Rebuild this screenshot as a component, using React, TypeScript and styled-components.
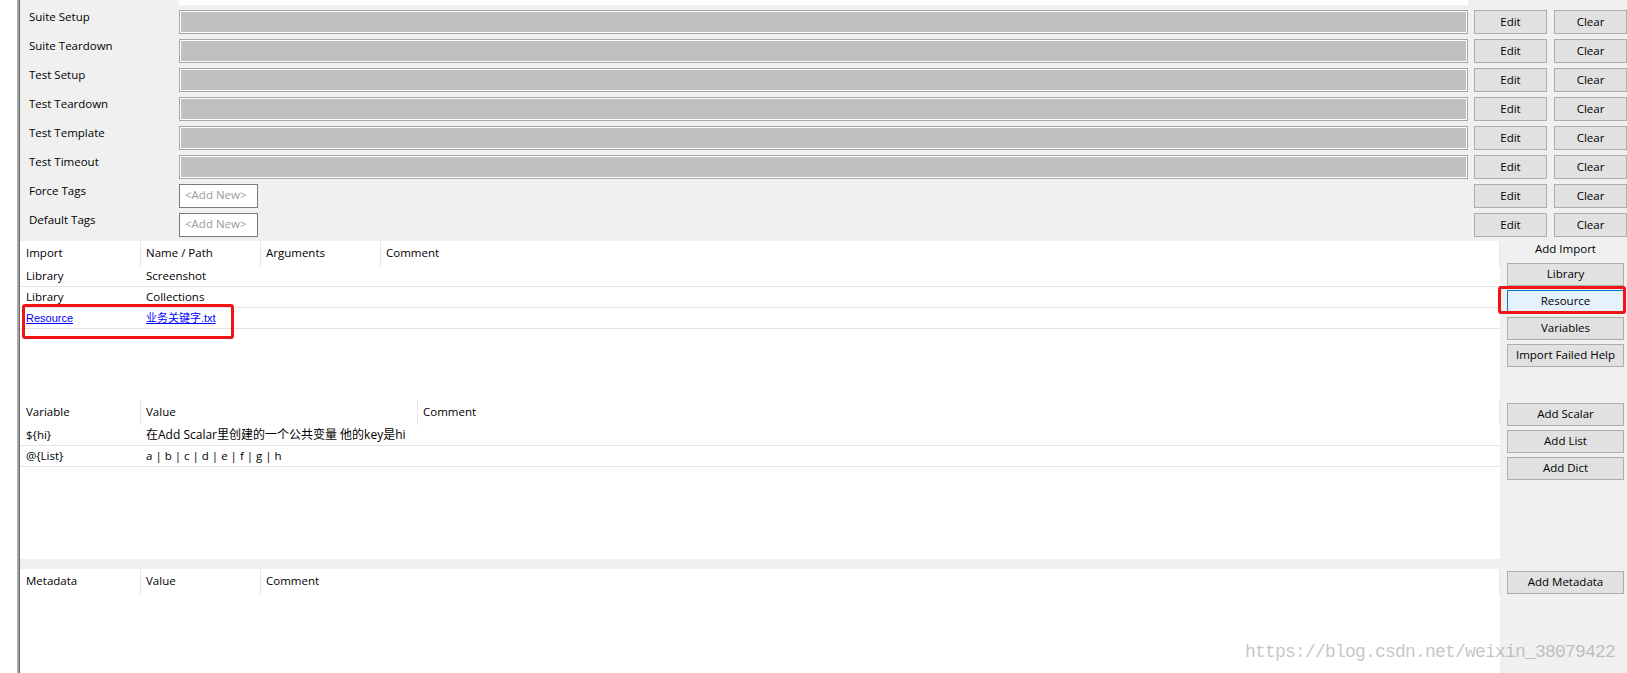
import React from "react";
import styled, { createGlobalStyle } from "styled-components";

const UI_FONT = `"Open Sans", "Noto Sans CJK SC", sans-serif`;

const GlobalStyle = createGlobalStyle`
  html, body {
    margin: 0;
    padding: 0;
    background: #ffffff;
  }
  body {
    font-family: ${UI_FONT};
    font-size: 11.5px;
    color: #000000;
  }
  * { box-sizing: border-box; }
`;

const Root = styled.div`
  position: relative;
  display: flex;
  width: 1627px;
  height: 673px;
  overflow: hidden;
  background: #ffffff;
`;

const Gutter = styled.div`
  flex: none;
  width: 17px;
  background: #ffffff;
`;

const Rule = styled.div`
  flex: none;
  width: 3px;
  background: #a9a9a9;
  border-right: 1px solid #666666;
`;

const Main = styled.div`
  flex: 1;
  min-width: 0;
  display: flex;
  flex-direction: column;
`;

/* ---------- settings block ---------- */

const Settings = styled.div`
  display: flex;
  flex-direction: column;
  gap: 5px;
  padding-bottom: 4px;
  background: #f0f0f0;
`;

const ClippedRow = styled.div`
  height: 5px;
  padding: 0 159px;
`;

const ClippedField = styled.div`
  height: 100%;
  background: #ffffff;
`;

const SettingRow = styled.div`
  display: flex;
  align-items: stretch;
  height: 24px;
`;

const SettingLabel = styled.div`
  flex: none;
  width: 159px;
  padding-left: 9px;
  line-height: 13px;
  white-space: nowrap;
`;

const FieldSlot = styled.div`
  flex: 1;
  display: flex;
  min-width: 0;
`;

const ValueField = styled.div`
  flex: 1;
  background: #c0c0c0;
  border: 1px solid #a6a6a6;
  box-shadow: inset 0 0 0 1px #ffffff;
`;

const TagBox = styled.div`
  flex: none;
  width: 79px;
  background: #ffffff;
  border: 1px solid #7a7a7a;
  color: #9a9a9a;
  padding-left: 5px;
  line-height: 20px;
  white-space: nowrap;
`;

const ActionButton = styled.button<{ $gap: number }>`
  flex: none;
  width: 73px;
  height: 24px;
  margin-left: ${(p) => p.$gap}px;
  padding: 0 0 2px;
  background: #e1e1e1;
  border: 1px solid #adadad;
  font-family: ${UI_FONT};
  font-size: 11.5px;
  color: #000000;
  text-align: center;
`;

/* ---------- lower grids ---------- */

const Lower = styled.div`
  flex: 1;
  display: flex;
  flex-direction: column;
  background: #f0f0f0;
`;

const Section = styled.div<{ $h?: number; $mt?: number }>`
  display: flex;
  flex: ${(p) => (p.$h ? "none" : "1")};
  height: ${(p) => (p.$h ? `${p.$h}px` : "auto")};
  margin-top: ${(p) => p.$mt ?? 0}px;
`;

const GridArea = styled.div`
  position: relative;
  flex: 1;
  min-width: 0;
  background: #ffffff;
`;

const GridHeader = styled.div`
  display: flex;
  height: 25px;
  padding-left: 1px;
`;

const HeaderCell = styled.div<{ $w?: number }>`
  flex: ${(p) => (p.$w ? "none" : "1")};
  width: ${(p) => (p.$w ? `${p.$w}px` : "auto")};
  display: flex;
  align-items: center;
  padding: 0 0 2px 5px;
  border-right: 1px solid #e5e5e5;
  white-space: nowrap;
`;

const GridRow = styled.div`
  display: flex;
  align-items: center;
  height: 21px;
  padding: 0 0 2px 1px;
  border-bottom: 1px solid #e3e3e3;
`;

const Cell = styled.div<{ $w?: number; $size?: number }>`
  flex: ${(p) => (p.$w ? "none" : "1")};
  width: ${(p) => (p.$w ? `${p.$w}px` : "auto")};
  padding-left: 5px;
  font-size: ${(p) => p.$size ?? 11.5}px;
  white-space: nowrap;
  overflow: hidden;
`;

const LinkText = styled.a`
  font-family: "Liberation Sans", "Noto Sans CJK SC", sans-serif;
  font-size: 11px;
  color: #0000ff;
  text-decoration: underline;
  cursor: pointer;
`;

const Side = styled.div<{ $pt: number }>`
  position: relative;
  flex: none;
  width: 127px;
  display: flex;
  flex-direction: column;
  gap: 4px;
  padding: ${(p) => p.$pt}px 3px 0 7px;
`;

const SideLabel = styled.div`
  line-height: 15px;
  margin-bottom: 3px;
  text-align: center;
  white-space: nowrap;
`;

const SideButton = styled.button<{ $active?: boolean }>`
  flex: none;
  height: 23px;
  padding: 0 0 2px;
  background: ${(p) => (p.$active ? "#e5f1fb" : "#e1e1e1")};
  border: 1px solid ${(p) => (p.$active ? "#0078d7" : "#adadad")};
  font-family: ${UI_FONT};
  font-size: 11.5px;
  color: #000000;
  text-align: center;
  white-space: nowrap;
`;

const Annotation = styled.div<{ $l: number; $t: number; $w: number; $h: number }>`
  position: absolute;
  left: ${(p) => p.$l}px;
  top: ${(p) => p.$t}px;
  width: ${(p) => p.$w}px;
  height: ${(p) => p.$h}px;
  border: 3px solid #f01414;
  border-radius: 3px;
  pointer-events: none;
`;

const Watermark = styled.div`
  position: absolute;
  right: 12px;
  bottom: 11px;
  font-family: "Liberation Mono", monospace;
  font-size: 18px;
  letter-spacing: -0.8px;
  line-height: 20px;
  color: rgba(140, 140, 140, 0.5);
  pointer-events: none;
  white-space: nowrap;
`;

type Setting = { label: string; kind: "field" | "tags" };

const settings: Setting[] = [
  { label: "Suite Setup", kind: "field" },
  { label: "Suite Teardown", kind: "field" },
  { label: "Test Setup", kind: "field" },
  { label: "Test Teardown", kind: "field" },
  { label: "Test Template", kind: "field" },
  { label: "Test Timeout", kind: "field" },
  { label: "Force Tags", kind: "tags" },
  { label: "Default Tags", kind: "tags" },
];

export default function App() {
  return (
    <>
      <GlobalStyle />
      <Root>
        <Gutter />
        <Rule />
        <Main>
          <Settings>
            <ClippedRow>
              <ClippedField />
            </ClippedRow>
            {settings.map((s) => (
              <SettingRow key={s.label}>
                <SettingLabel>{s.label}</SettingLabel>
                <FieldSlot>
                  {s.kind === "field" ? <ValueField /> : <TagBox>&lt;Add New&gt;</TagBox>}
                </FieldSlot>
                <ActionButton $gap={6}>Edit</ActionButton>
                <ActionButton $gap={7}>Clear</ActionButton>
              </SettingRow>
            ))}
          </Settings>

          <Lower>
            <Section $h={159}>
              <GridArea>
                <GridHeader>
                  <HeaderCell $w={120}>Import</HeaderCell>
                  <HeaderCell $w={120}>Name / Path</HeaderCell>
                  <HeaderCell $w={120}>Arguments</HeaderCell>
                  <HeaderCell>Comment</HeaderCell>
                </GridHeader>
                <GridRow>
                  <Cell $w={120}>Library</Cell>
                  <Cell $w={120}>Screenshot</Cell>
                </GridRow>
                <GridRow>
                  <Cell $w={120}>Library</Cell>
                  <Cell $w={120}>Collections</Cell>
                </GridRow>
                <GridRow>
                  <Cell $w={120}>
                    <LinkText>Resource</LinkText>
                  </Cell>
                  <Cell $w={120}>
                    <LinkText>业务关键字.txt</LinkText>
                  </Cell>
                </GridRow>
                <Annotation $l={2} $t={63} $w={212} $h={35} />
              </GridArea>
              <Side $pt={0}>
                <SideLabel>Add Import</SideLabel>
                <SideButton>Library</SideButton>
                <SideButton $active>Resource</SideButton>
                <SideButton>Variables</SideButton>
                <SideButton>Import Failed Help</SideButton>
                <Annotation $l={-2} $t={45} $w={128} $h={28} />
              </Side>
            </Section>

            <Section $h={159}>
              <GridArea>
                <GridHeader>
                  <HeaderCell $w={120}>Variable</HeaderCell>
                  <HeaderCell $w={277}>Value</HeaderCell>
                  <HeaderCell>Comment</HeaderCell>
                </GridHeader>
                <GridRow>
                  <Cell $w={120}>{"${hi}"}</Cell>
                  <Cell $w={277} $size={12}>在Add Scalar里创建的一个公共变量 他的key是hi</Cell>
                </GridRow>
                <GridRow>
                  <Cell $w={120}>{"@{List}"}</Cell>
                  <Cell $w={277}>a | b | c | d | e | f | g | h</Cell>
                </GridRow>
              </GridArea>
              <Side $pt={3}>
                <SideButton>Add Scalar</SideButton>
                <SideButton>Add List</SideButton>
                <SideButton>Add Dict</SideButton>
              </Side>
            </Section>

            <Section $mt={10}>
              <GridArea>
                <GridHeader>
                  <HeaderCell $w={120}>Metadata</HeaderCell>
                  <HeaderCell $w={120}>Value</HeaderCell>
                  <HeaderCell>Comment</HeaderCell>
                </GridHeader>
              </GridArea>
              <Side $pt={2}>
                <SideButton>Add Metadata</SideButton>
              </Side>
            </Section>
          </Lower>
        </Main>
        <Watermark>https://blog.csdn.net/weixin_38079422</Watermark>
      </Root>
    </>
  );
}
